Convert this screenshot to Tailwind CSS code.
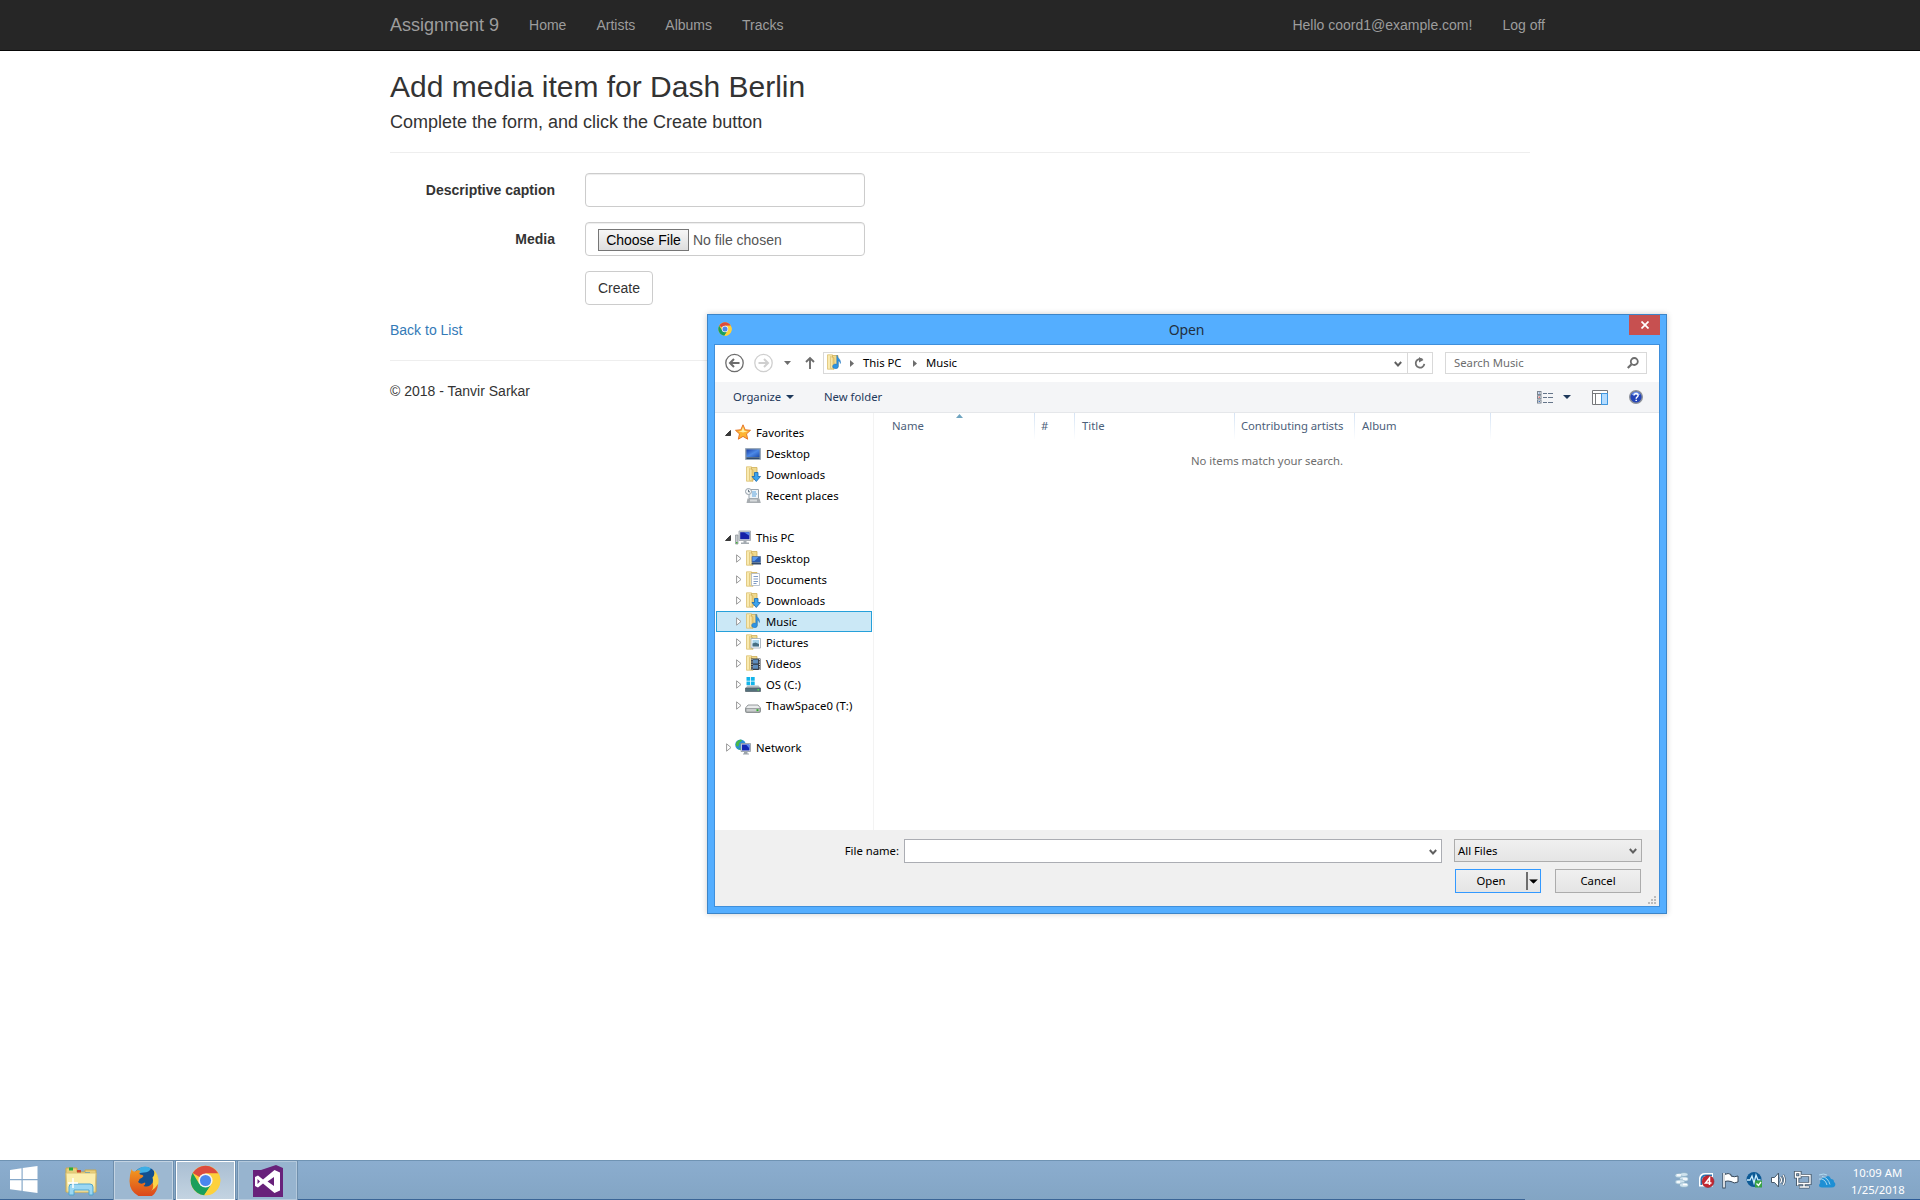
<!DOCTYPE html>
<html lang="en">
<head>
<meta charset="utf-8">
<title>Add media item</title>
<script src="https://cdn.jsdelivr.net/npm/@tailwindcss/browser@4"></script>
</head>
<body class="relative h-[1200px] w-[1920px] overflow-hidden bg-white font-['Liberation_Sans',Arial,sans-serif] text-sm leading-5 text-[#333]">
<svg class="absolute h-0 w-0">
  <defs>
    <linearGradient id="gold" x1="0" x2="1"><stop offset="0" stop-color="#fdf3bf"/><stop offset="1" stop-color="#e3c36c"/></linearGradient>
    <linearGradient id="screen" x1="0" y1="0" x2="1" y2="1"><stop offset="0" stop-color="#1a3fa8"/><stop offset=".5" stop-color="#4d8ae8"/><stop offset="1" stop-color="#1c4cae"/></linearGradient>
    <linearGradient id="fox" x1="0" y1="0" x2="0" y2="1"><stop offset="0" stop-color="#f39a1f"/><stop offset="1" stop-color="#d9401c"/></linearGradient>
  </defs>
  <symbol id="chrome" viewBox="0 0 48 48">
    <circle cx="24" cy="24" r="23" fill="#fdd13c"/>
    <path d="M24 24 L4.1 12.5 A23 23 0 0 1 43.9 13 H24Z" fill="#dc4b3e"/>
    <path d="M4.1 12.5 A23 23 0 0 0 22 46.9 L33.5 29.5 24 24 14.5 29.5Z" fill="#1a9f5c"/>
    <path d="M24 13H43.9A23 23 0 0 1 22 46.9L33.5 29.5Z" fill="#fdd13c"/>
    <circle cx="24" cy="24" r="11" fill="#f4f4f4"/><circle cx="24" cy="24" r="8.6" fill="#4a86ee"/>
  </symbol>
  <symbol id="folder" viewBox="0 0 16 16">
    <path d="M1.5.8h5v14.4h-5z" fill="#f9eab0" stroke="#dcc070" stroke-width=".8"/>
    <path d="M6.5 1.500h5.500v12H6.500z" fill="#f0d98d" stroke="#cfae58" stroke-width=".8"/>
    <path d="M4.500 2.500l3.500 1.300v11.600l-3.500-1z" fill="url(#gold)" stroke="#d3b25c" stroke-width=".6"/>
  </symbol>
  <symbol id="f-desktop" viewBox="0 0 16 16"><use href="#folder"/><path d="M7 6.500h8.500v6H7z" fill="#2a5cb0" stroke="#5d7595" stroke-width=".8"/><path d="M7.500 7h6l-4 4h-2z" fill="#5a9aef"/><path d="M6.600 13h9.400v1.500H6.600z" fill="#334b6a"/></symbol>
  <symbol id="f-doc" viewBox="0 0 16 16"><use href="#folder"/><path d="M6.500 2.500h8v12h-8z" fill="#fff" stroke="#a9b5c4" stroke-width=".8"/><path d="M8.500 5.500H13M8.500 8H13M8.500 10.500H13M8.500 12.500h3" stroke="#7090bd" stroke-width=".9"/></symbol>
  <symbol id="f-down" viewBox="0 0 16 16"><use href="#folder"/><path d="M9.500 6.500h3.500v4h2.500l-4.200 5-4.300-5h2.500z" fill="#3ba3ee" stroke="#1667ae" stroke-width=".8"/></symbol>
  <symbol id="f-music" viewBox="0 0 16 16"><use href="#folder"/><path d="M11.300 1.500c0 3 4 3.500 3 8-.2-2-1.300-2.600-2-2.800v5.800a2.800 2.300 0 1 1-1.500-2.200V1.500z" fill="#2d93e2" stroke="#1a6fb8" stroke-width=".5"/></symbol>
  <symbol id="f-pic" viewBox="0 0 16 16"><use href="#folder"/><path d="M6 4.500h9.500v9.500H6z" fill="#fff" stroke="#9aa8b5" stroke-width=".8"/><path d="M7.500 6h6.500v6.500H7.500z" fill="#a9d5ec"/><path d="M7.500 9.500l3-1 3.500 1.500v2.500H7.500z" fill="#476f84"/></symbol>
  <symbol id="f-vid" viewBox="0 0 16 16"><use href="#folder"/><path d="M6 3.500h9.500v11.500H6z" fill="#343a42"/><path d="M8 4.500h5v4H8zM8 9.700h5v4H8z" fill="#5d8dbd"/><path d="M7 4v11M14.400 4v11" stroke="#dfe5ea" stroke-dasharray="1.200 1.200"/></symbol>
  <symbol id="desk" viewBox="0 0 16 16"><path d="M.5 2.500h15v11H.5z" fill="#8093a8" stroke="#9baaba"/><path d="M1.500 3.500h13v7.500h-13z" fill="url(#screen)"/><path d="M1.500 11.500h13v1.500h-13z" fill="#2f4a6d"/></symbol>
  <symbol id="recent" viewBox="0 0 16 16"><path d="M4 1.500h9.500v9H4z" fill="#eef4f8" stroke="#9aa5ae"/><path d="M7 4h4M7 6h5M7 8h4" stroke="#5aa2dc"/><path d="M2.500 10.500h12l1.300 4.500H1.500z" fill="#a8adb1"/><path d="M5 11.500h7v2H5z" fill="#d7dadc"/><circle cx="3.500" cy="3.500" r="3" fill="#f4f7f9" stroke="#97a1aa"/><path d="M3.500 1.800v2h1.500" stroke="#456" fill="none" stroke-width=".8"/></symbol>
  <symbol id="star" viewBox="0 0 16 16"><path d="M8 .8l2.200 5 5.300.5-4 3.600 1.200 5.300L8 12.400l-4.700 2.800 1.200-5.300-4-3.600 5.300-.5z" fill="#fdb432" stroke="#e5772a"/><path d="M8 3l1.300 3.700 3.500.5L8 8.500 3.500 7.200l3.200-.5z" fill="#fff0a6"/></symbol>
  <symbol id="pc" viewBox="0 0 16 16"><path d="M.5 5h2.500v9H.5z" fill="#c5cacd" stroke="#8a9196" stroke-width=".7"/><path d="M4 1h11.500v9.500H4z" fill="#d0d5da" stroke="#9aa1a8" stroke-width=".8"/><path d="M5.200 2.200h9.200v7H5.200z" fill="#1520a8"/><path d="M9 2.200h5.400v3.500z" fill="#5485e8"/><path d="M8.500 11h3v1.500h2.500V14H6v-1.500h2.500z" fill="#a4abb1"/><path d="M1 12h1.500v1.500H1z" fill="#46b33b"/></symbol>
  <symbol id="os" viewBox="0 0 16 16"><path d="M1.500 0h3.700v3.700H1.500zM6 0h3.700v3.700H6zM1.500 4.500h3.700v3.700H1.500zM6 4.500h3.700v3.700H6z" fill="#12b4ea"/><path d="M2.500 8.500h11l2 2.500v3.500H.5V11z" fill="#b4bcc2"/><path d="M.5 11h15v3.500H.5z" fill="#54707c" stroke="#46585f" stroke-width=".6"/><path d="M12.500 12h1.500v1.500h-1.500z" fill="#58e04a"/></symbol>
  <symbol id="drive" viewBox="0 0 16 16"><path d="M3 7h10l2.500 3v3.500c0 .8-.5 1-1 1h-13c-.6 0-1-.3-1-1V10z" fill="#e9ebec" stroke="#8b8f92" stroke-width=".9"/><path d="M1 10.500h14v3.500H1z" fill="#c9cccd" stroke="#85898b" stroke-width=".7"/><path d="M11.500 11.200h2v1.900h-2z" fill="#2fae28"/></symbol>
  <symbol id="net" viewBox="0 0 16 16"><circle cx="5.500" cy="5.800" r="5.300" fill="#2b8fd6"/><path d="M1 4c2-3.500 4-3.500 6-3-1 2.500-3 2-3 4.500S2 7.500 1 7zM3 8.500l3 1.500-1 1z" fill="#47b94a"/><path d="M6 4.500h9.500v8H6z" fill="#dfe4e9" stroke="#8e979f" stroke-width=".8"/><path d="M7 5.500h7.500v6H7z" fill="#1427b4"/><path d="M11 5.500h3.500v4z" fill="#5a8af0"/><path d="M9 13h3.500v1.500H14v1H8v-1h1z" fill="#9ba3aa"/></symbol>
  <symbol id="closed" viewBox="0 0 6 9"><path d="M.6.800v7.400L5 4.500z" fill="#fff" stroke="#9a9a9a"/></symbol>
  <symbol id="opened" viewBox="0 0 6 6"><path d="M5.500.5v5h-5z" fill="#3a3a3a" stroke="#222" stroke-width=".8"/></symbol>
  <symbol id="chev" viewBox="0 0 8 6"><path d="M.8 1L4 4.500 7.200 1" fill="none" stroke="#606060" stroke-width="1.900"/></symbol>
  <symbol id="tri" viewBox="0 0 8 4"><path d="M0 0h8L4 4z" fill="currentColor"/></symbol>
</svg>

<nav class="h-[51px] border-b border-[#080808] bg-[#262626] text-[#9d9d9d]">
  <div class="mx-auto flex h-[50px] w-[1170px] items-center pl-[15px]">
    <a class="mr-[30px] text-lg">Assignment 9</a>
    <div class="flex gap-[30px]"><a>Home</a><a>Artists</a><a>Albums</a><a>Tracks</a></div>
    <div class="ml-auto flex gap-[30px]"><a>Hello coord1@example.com!</a><a>Log off</a></div>
  </div>
</nav>

<main class="mx-auto w-[1140px] pt-[19px]">
  <h2 class="text-[30px] leading-[33px]">Add media item for Dash Berlin</h2>
  <h4 class="mt-[9px] text-lg leading-5">Complete the form, and click the Create button</h4>
  <hr class="mt-5 border-[#eee]">
  <form class="mt-5 grid grid-cols-[165px_280px] gap-x-[30px] gap-y-[15px]">
    <label class="pt-[7px] text-right font-bold">Descriptive caption</label>
    <input class="h-[34px] rounded border border-[#ccc] shadow-[inset_0_1px_1px_rgba(0,0,0,.075)]">
    <label class="pt-[7px] text-right font-bold">Media</label>
    <div class="flex h-[34px] items-start rounded border border-[#ccc] px-3 pt-1.5 text-[#555] shadow-[inset_0_1px_1px_rgba(0,0,0,.075)]">
      <span class="mr-1 flex h-[22px] w-[91px] items-center justify-center border border-[#767676] bg-linear-to-b from-[#f6f6f6] to-[#dedede] text-black">Choose File</span>
      <span class="leading-[22px]">No file chosen</span>
    </div>
    <span class="col-start-2 flex h-[34px] w-[68px] items-center justify-center rounded border border-[#ccc]">Create</span>
  </form>
  <p class="mt-[15px] text-[#337ab7]">Back to List</p>
  <hr class="mt-5 border-[#eee]">
  <p class="mt-5">© 2018 - Tanvir Sarkar</p>
</main>

<!-- File dialog -->
<section class="absolute left-[707px] top-[314px] flex h-[600px] w-[960px] flex-col border border-[#3c85c8] bg-[#54aeff] px-1.5 pb-1.5 font-['Noto_Sans','Open_Sans',sans-serif] text-[11.3px] leading-[21px] text-black shadow-[0_0_6px_rgba(0,0,0,.2)]">
  <header class="flex h-[29px] shrink-0 items-start">
    <svg class="ml-1 mt-[7px] h-3.5 w-3.5"><use href="#chrome"/></svg>
    <div class="flex-1 pl-3 pt-1 text-center text-[14px] leading-[21px] tracking-[-0.1px] text-[#22303e]">Open</div>
    <div class="flex h-5 w-[31px] items-center justify-center bg-[#c75050]"><svg class="h-2 w-2" viewBox="0 0 8 8"><path d="M.5.500l7 7m0-7l-7 7" stroke="#fff" stroke-width="1.700"/></svg></div>
  </header>
  <div class="flex w-[946px] flex-1 flex-col border border-[#3f8fdb] bg-white">
    <div class="flex h-[37px] items-start pl-[9px] pt-[7px]">
      <svg class="h-[22px] w-[100px]" viewBox="0 0 100 22" fill="none"><g stroke="#6d6d6d"><circle cx="10.500" cy="11" r="8.700" stroke-width="1.300"/><path d="M6.300 11H15.500M10 7L6 11l4 4" stroke-width="2"/></g><g stroke="#cfcfcf"><circle cx="39.500" cy="11" r="8.700" stroke-width="1.300"/><path d="M34.500 11h9M40 7l4 4-4 4" stroke-width="2"/></g><path d="M60 9h7l-3.500 4z" fill="#6d6d6d"/><path d="M86 17V6.500M82 10l4-4 4 4" stroke="#6d6d6d" stroke-width="1.900"/></svg>
      <div class="-ml-px flex h-[22px] w-[610px] items-center border border-[#d9d9d9]">
        <svg class="ml-0.5 h-4 w-4 -translate-y-px"><use href="#f-music"/></svg>
        <svg class="ml-2 h-[7px] w-1" viewBox="0 0 4 7"><path d="M0 0v7l4-3.500z" fill="#6d6d6d"/></svg>
        <span class="ml-[9px] w-[41px] -translate-y-px">This PC</span>
        <svg class="ml-[9px] h-[7px] w-1" viewBox="0 0 4 7"><path d="M0 0v7l4-3.500z" fill="#6d6d6d"/></svg>
        <span class="ml-[9px] -translate-y-px">Music</span>
        <svg class="ml-auto mr-[5px] mt-0.5 h-1.5 w-2"><use href="#chev"/></svg>
        <div class="flex h-full w-[25px] items-center justify-center border-l border-[#d9d9d9]"><svg class="h-3 w-3" viewBox="0 0 12 12"><path d="M8.500 2.800A4.300 4.300 0 1 0 10.300 6.800" fill="none" stroke="#707070" stroke-width="1.800"/><path d="M5 0v5.500L9.500 3z" fill="#707070"/></svg></div>
      </div>
      <div class="ml-3 flex h-[22px] w-[202px] items-center border border-[#d9d9d9] pl-2 pr-[7px] text-[#6d6d6d]"><span class="-translate-y-px">Search Music</span><svg class="ml-auto h-3 w-3" viewBox="0 0 12 12" fill="none" stroke="#6d6d6d"><circle cx="7.300" cy="4.500" r="3.500" stroke-width="1.800"/><path d="M4.500 7.300L.8 11" stroke-width="2.200"/></svg></div>
    </div>
    <div class="flex h-[31px] items-center border-b border-[#e5e7ea] bg-[#f4f5f7] pl-[18px] text-[#1e395b]">
      <span class="w-[47px] -translate-y-px">Organize</span><svg class="ml-1.5 h-1 w-2"><use href="#tri"/></svg>
      <span class="ml-[30px] -translate-y-px">New folder</span>
      <svg class="ml-auto h-[13px] w-4" viewBox="0 0 16 13"><g fill="#fff" stroke="#7b8591"><rect x=".5" y=".5" width="3.500" height="3" /><rect x=".5" y="4.700" width="3.500" height="3"/><rect x=".5" y="9" width="3.500" height="3"/></g><path d="M1.500 2h1.500M1.500 10.500h1.500" stroke="#4472b8"/><path d="M1.500 6.200h1.500" stroke="#c33"/><path d="M6 2.500h4m1 0h5M6 6.500h4m1 0h5M6 11.500h4m1 0h5" stroke="#65758a"/></svg>
      <svg class="ml-[10px] h-1 w-2"><use href="#tri"/></svg>
      <svg class="ml-[21px] h-[15px] w-4" viewBox="0 0 16 15"><path d="M.5.500h15v14H.5z" fill="#fff" stroke="#77797c"/><path d="M0 3.500h16M3.500 3.500V15" stroke="#77797c"/><path d="M9.500 3.500h6v11h-6z" fill="#b4dcff" stroke="#3f97e0"/></svg>
      <svg class="ml-[21px] mr-4 h-3.5 w-3.5" viewBox="0 0 14 14"><circle cx="7" cy="7" r="6.300" fill="#2546b8" stroke="#8f9399" stroke-width="1.400"/><path d="M2.500 5A4.700 4.700 0 0 1 11.500 5z" fill="#6f93e6"/><path d="M5 5.500c0-2.700 4.300-2.500 4.100 0C9 7 7.200 7 7.200 8.700M7.200 9.800v1.300" stroke="#fff" stroke-width="1.500" fill="none"/></svg>
    </div>
    <div class="flex h-[417px]">
      <aside class="w-[159px] border-r border-[#f3f3f3] pl-px pr-px pt-[9px] [&>div]:flex [&>div]:h-[21px] [&>div]:items-center [&>div]:whitespace-nowrap">
        <div class="pl-[9px]"><svg class="mr-1 h-1.5 w-1.5"><use href="#opened"/></svg><svg class="mr-[5px] h-4 w-4 -translate-y-px"><use href="#star"/></svg>Favorites</div>
        <div class="pl-[29px]"><svg class="mr-[5px] h-4 w-4"><use href="#desk"/></svg>Desktop</div>
        <div class="pl-[29px]"><svg class="mr-[5px] h-4 w-4 -translate-y-px"><use href="#f-down"/></svg>Downloads</div>
        <div class="pl-[29px]"><svg class="mr-[5px] h-4 w-4"><use href="#recent"/></svg>Recent places</div>
        <div></div>
        <div class="pl-[9px]"><svg class="mr-1 h-1.5 w-1.5"><use href="#opened"/></svg><svg class="mr-[5px] h-4 w-4"><use href="#pc"/></svg>This PC</div>
        <div class="pl-5"><svg class="mr-[3px] h-[9px] w-1.5"><use href="#closed"/></svg><svg class="mr-[5px] h-4 w-4 -translate-y-px"><use href="#f-desktop"/></svg>Desktop</div>
        <div class="pl-5"><svg class="mr-[3px] h-[9px] w-1.5"><use href="#closed"/></svg><svg class="mr-[5px] h-4 w-4 -translate-y-px"><use href="#f-doc"/></svg>Documents</div>
        <div class="pl-5"><svg class="mr-[3px] h-[9px] w-1.5"><use href="#closed"/></svg><svg class="mr-[5px] h-4 w-4 -translate-y-px"><use href="#f-down"/></svg>Downloads</div>
        <div class="border border-[#26a0da] bg-[#cbe8f6] pl-[19px]"><svg class="mr-[3px] h-[9px] w-1.5"><use href="#closed"/></svg><svg class="mr-[5px] h-4 w-4 -translate-y-px"><use href="#f-music"/></svg>Music</div>
        <div class="pl-5"><svg class="mr-[3px] h-[9px] w-1.5"><use href="#closed"/></svg><svg class="mr-[5px] h-4 w-4 -translate-y-px"><use href="#f-pic"/></svg>Pictures</div>
        <div class="pl-5"><svg class="mr-[3px] h-[9px] w-1.5"><use href="#closed"/></svg><svg class="mr-[5px] h-4 w-4 -translate-y-px"><use href="#f-vid"/></svg>Videos</div>
        <div class="pl-5"><svg class="mr-[3px] h-[9px] w-1.5"><use href="#closed"/></svg><svg class="mr-[5px] h-4 w-4"><use href="#os"/></svg>OS (C:)</div>
        <div class="pl-5"><svg class="mr-[3px] h-[9px] w-1.5"><use href="#closed"/></svg><svg class="mr-[5px] h-4 w-4"><use href="#drive"/></svg><span class="tracking-[0.08px]">ThawSpace0 (T:)</span></div>
        <div></div>
        <div class="pl-[10px]"><svg class="mr-[3px] h-[9px] w-1.5"><use href="#closed"/></svg><svg class="mr-[5px] h-4 w-4 -translate-y-px"><use href="#net"/></svg>Network</div>
      </aside>
      <div class="relative flex-1">
        <svg class="absolute left-[82px] top-px h-1 w-[7px]" viewBox="0 0 7 4"><path d="M0 4L3.500 0 7 4z" fill="#6fa4c0"/></svg>
        <div class="grid h-[22px] grid-cols-[161px_40px_160px_120px_136px] text-[#4c607a] leading-[26px] whitespace-nowrap [&>div]:border-r [&>div]:[border-image:linear-gradient(#d3e2f4,#fff)_1]">
          <div class="pl-[18px]">Name</div><div class="pl-1.5">#</div><div class="pl-[7px]">Title</div><div class="pl-1.5 tracking-[-0.05px]">Contributing artists</div><div class="pl-[7px]">Album</div>
        </div>
        <div class="pl-px pt-[15px] text-center text-[#6d6d6d]">No items match your search.</div>
      </div>
    </div>
    <footer class="relative flex-1 bg-[#f0f0f0] pt-[9px]">
      <div class="flex items-start">
        <span class="w-[184px] text-right leading-6">File name:</span>
        <div class="ml-[5px] flex h-6 w-[538px] items-center justify-end border border-[#abadb3] bg-white pr-1"><svg class="mt-0.5 h-1.5 w-2"><use href="#chev"/></svg></div>
        <div class="ml-3 flex h-[23px] w-[188px] items-center justify-between border border-[#acacac] bg-linear-to-b from-[#f0f0f0] to-[#e5e5e5] pl-[3px] pr-1"><span>All Files</span><svg class="h-1.5 w-2"><use href="#chev"/></svg></div>
      </div>
      <div class="mt-1.5 flex justify-end gap-3.5 pr-[18px]">
        <div class="flex h-6 w-[86px] items-center border border-[#3399ff] bg-linear-to-b from-[#f0f0f0] to-[#e5e5e5]"><span class="w-[70px] -translate-y-px text-center">Open</span><i class="h-[18px] w-0.5 shrink-0 bg-[#6d6d6d]"></i><svg class="ml-px h-[5px] w-[9px]" viewBox="0 0 8 4"><use href="#tri"/></svg></div>
        <div class="flex h-6 w-[86px] items-center justify-center border border-[#acacac] bg-linear-to-b from-[#f0f0f0] to-[#e5e5e5]"><span class="-translate-y-px">Cancel</span></div>
      </div>
      <svg class="absolute bottom-0.5 right-[3px] h-2 w-2" viewBox="0 0 8 8" fill="#bcbcbc"><path d="M6 0h2v2H6zM3 3h2v2H3zM6 3h2v2H6zM0 6h2v2H0zM3 6h2v2H3zM6 6h2v2H6z"/></svg>
    </footer>
  </div>
</section>

<!-- Taskbar -->
<footer class="absolute bottom-0 left-0 flex h-10 w-full items-start border-t border-[#6f93b3] bg-linear-to-b from-[#8badcf] to-[#83a5c4] font-['Noto_Sans','Open_Sans',sans-serif] text-white">
  <i class="absolute bottom-0 left-0 h-px w-[1525px] bg-[#3b6596]"></i>
  <i class="absolute bottom-0 right-0 h-px w-10 bg-[#2d5c97]"></i>
  <svg class="ml-2.5 mt-[5px] h-7 w-7 shrink-0" viewBox="0 0 28 28" fill="#fff"><path d="M0 4l11.500-1.700V13H0zM12.700 2.100L27.500 0v13H12.700zM0 14.200h11.500v10.600L0 23.200zM12.700 14.200h14.800V27l-14.800-2z"/></svg>
  <svg class="ml-[27px] mt-[5px] h-[30px] w-8 shrink-0" viewBox="0 0 32 30"><path d="M1 2h11v4h8V4h11v22H1z" fill="#e9cf7c" stroke="#c7a951"/><path d="M4 1.500h4v3H4z" fill="#2bac3c"/><path d="M12 4h4v3h-4z" fill="#c9452b"/><path d="M20 6h5v3h-5z" fill="#2e8fd8"/><path d="M1 7h30l-1 19H2z" fill="#fbeeae" stroke="#dcc273"/><path d="M4 29V21q0-3 3-3h18q3 0 3 3v8h-4v-5H9v5z" fill="#9bd7f2" stroke="#4ea4cf"/><path d="M8 12v10M3 17h10" stroke="#fff" stroke-width="1.500"/></svg>
  <div class="relative ml-[17px] flex h-[39px] gap-[3px]">
    <div class="flex w-[59px] items-center justify-center border border-[#c3d3e2] bg-[#9db8d1] shadow-[0_0_0_1px_#6f8fad]">
      <svg class="h-[30px] w-[30px]" viewBox="0 0 30 30"><circle cx="16" cy="13.500" r="12.500" fill="#124f90"/><path d="M8 4q7-6 14-1.500-2 4-7 4t-7 3z" fill="#3eaee5"/><path d="M24.500 3.500q5.500 5 5 13-1 6-5 9l-4-4q5-4 3-10 3-3 1-8z" fill="#fbd44a"/><path d="M2.500 3q1 3 3.500 2.500 3-2 5.500-.5-2 2-.5 3.500 3 0 3.500 1.500-1 2-4 3-.5 2-1.500 3 3 3 7 .5 1 2-1.500 3.500 6 2 9-3.500 2 5-1.500 8.500 4-2 7-7-1 13-13.500 14.500Q.5 28 .5 15 .8 8 2.500 3z" fill="url(#fox)"/></svg>
    </div>
    <div class="flex w-[59px] items-center justify-center border border-white bg-linear-to-b from-[#aabfd3] to-[#c3d3e1] shadow-[0_0_0_1px_#6f8fad]"><svg class="h-[31px] w-[31px]"><use href="#chrome"/></svg></div>
    <div class="flex w-[59px] items-center justify-center border border-[#b4c9dc] bg-[#97b4cf] shadow-[0_0_0_1px_#6f8fad]">
      <svg class="h-8 w-[30px]" viewBox="0 0 30 32"><path d="M0 5h8L23 0l7 3v29H0z" fill="#68217a"/><path d="M2 12l3-1.500 5 4L21.500 5 27 7.500v18L21.500 28 10 18.500l-5 4L2 21zM4.500 14v5L7 16.500zM21 12l-6.500 4.500L21 21z" fill="#fff" fill-rule="evenodd"/></svg>
    </div>
  </div>
  <svg class="ml-auto mt-[9px] h-5 w-[162px] shrink-0" viewBox="0 0 162 20" fill="none">
    <g fill="#cfe3ee" stroke="#7fa5be" stroke-width=".6"><ellipse cx="5" cy="5.500" rx="5" ry="2.300"/><ellipse cx="9" cy="4.500" rx="4" ry="2"/><ellipse cx="9" cy="9" rx="4.500" ry="2.500"/><ellipse cx="5" cy="12" rx="5" ry="2.300"/><ellipse cx="9" cy="15" rx="4.500" ry="2.300"/></g><path d="M2 5h4M8 9h4M2 12h3M8 14.500h4" stroke="#fff" stroke-width="1.300"/>
    <path d="M24 16.500V8q1-5 6-5h8v13.500z" fill="#fff"/><path d="M25.500 15V9q.5-4.500 5-4.500h6.500V15z" fill="#2476b8"/><path d="M27 15V9.500Q28 6 31 6h6v9z" fill="#fff"/><circle cx="33" cy="11.500" r="6" fill="#c32631" stroke="#8b1c25" stroke-width=".5"/><path d="M34.500 15V8l-4 5h6" stroke="#fff" stroke-width="1.500"/>
    <path d="M49 3v15.500" stroke="#36485a" stroke-width="3.200"/><path d="M49.500 4.500q4-2 6.500 0v1.500q3 1.500 7 0v6q-4 2-7-.5-3-1-6.500 0z" fill="#fff" stroke="#36485a"/><path d="M49 3v14.500" stroke="#fff" stroke-width="1.600"/>
    <circle cx="79" cy="9.500" r="7.500" fill="#0c5a96"/><path d="M72 10h3l2-4 2 7 2-8 2 5h2.500" stroke="#cbeeff" stroke-width="1.300"/><path d="M80 10.500h7v7h-7z" fill="#39a344"/><path d="M81.500 13.500l2 2L86 12" stroke="#fff" stroke-width="1.300"/>
    <path d="M96.500 7.500h3l4-4.500v14l-4-4.500h-3z" fill="#fff" stroke="#46596b"/><path d="M105.500 7q2 3 0 6M108 5q3.200 5 0 10" stroke="#46596b" stroke-width="2.400"/><path d="M105.500 7q2 3 0 6M108 5q3.200 5 0 10" stroke="#fff" stroke-width="1.200"/>
    <path d="M126 5.500h9v8h-11.500M129 13.500v3.500M124 17H134.500M120.500 2.500h4.500v4.500h-4.500zM122.700 7v9" stroke="#46596b" stroke-width="3.200"/><path d="M126 5.500h9v8h-11.500M129 13.500v3.500M124.500 17H134M120.500 2.500h4.500v4.500h-4.500zM122.700 7v8.500" stroke="#fff" stroke-width="1.400"/>
    <path d="M144 15q2-2 1-4 2-4 6-4 3-3 5 2 3 0 3 3 2 1 1 4-1 1.500-4 1.500h-9q-3 0-3-2.500z" fill="#1e8fd4"/><path d="M144 5q5-2 8 0M144 9q6-1 8 6M147 6.500q6 1 8 8" stroke="#b5e0f5" stroke-width=".9"/>
  </svg>
  <div class="ml-[14px] mr-4 w-[53px] pt-[3px] text-center text-[11.300px] leading-[17px] whitespace-nowrap">10:09 AM<br>1/25/2018</div>
</footer>
</body>
</html>
